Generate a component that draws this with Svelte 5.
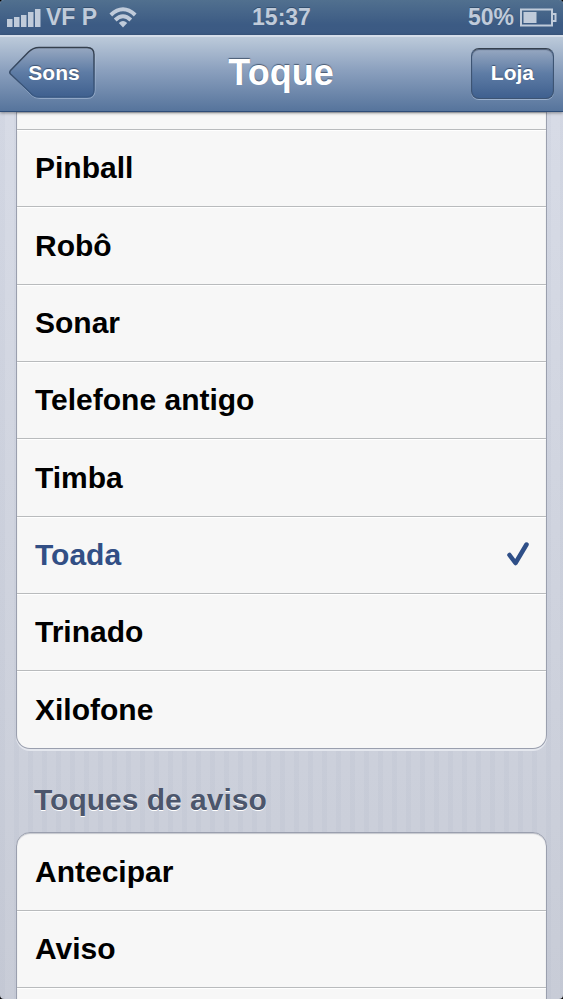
<script>
  let selected = "Toada";

  // an empty name is a row that is mostly scrolled out of view
  let ringtones = [
    "",
    "Pinball",
    "Robô",
    "Sonar",
    "Telefone antigo",
    "Timba",
    "Toada",
    "Trinado",
    "Xilofone",
  ];
  let alerts = ["Antecipar", "Aviso", ""];
</script>

{#snippet row(name)}
  <li>
    {#if name}
      <label class:selected={selected === name}>
        <input type="radio" name="tone" value={name} bind:group={selected} />
        <span>{name}</span>
        {#if selected === name}
          <svg class="check" width="24" height="26" viewBox="0 0 24 26">
            <path d="M3.5 13L9.5 21L20.5 2.500" />
          </svg>
        {/if}
      </label>
    {/if}
  </li>
{/snippet}

<div class="phone">
  <div class="status">
    <div class="carrier">
      <svg width="36" height="20" viewBox="0 0 36 20">
        <path d="M1 11h5.500v8h-5.500zM8 9h5.500v10h-5.500zM15 7h5.500v12h-5.500zM22 4h5.500v15h-5.500zM29 1h5.500v18h-5.500z" />
      </svg>
      <span>VF P</span>
      <svg class="wifi" width="28" height="21" viewBox="0 0 28 21">
        <path class="arc" d="M1.800 8Q14 -3.500 26.200 8" />
        <path class="arc" d="M6.200 13Q14 5.500 21.800 13" />
        <path d="M14 20.500L9.800 16Q14 12 18.200 16Z" />
      </svg>
    </div>
    <span>15:37</span>
    <div class="battery">
      <span>50%</span>
      <svg width="37" height="19" viewBox="0 0 37 19">
        <path class="case" d="M1 1.500h31v16h-31zM32 6h3.500v7h-3.500" />
        <path d="M3.500 4h13v11h-13z" />
      </svg>
    </div>
  </div>

  <header>
    <button class="back">
      <svg width="88" height="54" viewBox="0 0 88 54">
        <defs>
          <linearGradient id="backFill" x1="0" y1="0" x2="0" y2="1">
            <stop offset="0" stop-color="#97a8c1" />
            <stop offset="0.5" stop-color="#5e7ca5" />
            <stop offset="1" stop-color="#3f608f" />
          </linearGradient>
          <linearGradient id="backLine" x1="0" y1="0" x2="0" y2="1">
            <stop offset="0" stop-color="#35404e" />
            <stop offset="1" stop-color="#3a5a86" />
          </linearGradient>
        </defs>
        <path
          class="shine"
          d="M32 2.500H79Q87 2.500 87 10.500V44.500Q87 52.500 79 52.500H32Q26.500 52.500 23 49L3 29Q1.500 27 3 25L21 6Q25.500 2.500 32 2.500Z"
        />
        <path
          fill="url(#backFill)"
          stroke="url(#backLine)"
          stroke-width="1.500"
          d="M31 1.500H79Q86 1.500 86 8.500V44Q86 51 79 51H31Q25.500 51 22 46.500L2.500 28Q1 26.300 2.500 24.500L20.500 6Q25 1.500 31 1.500Z"
        />
      </svg>
      <span>Sons</span>
    </button>
    <h1>Toque</h1>
    <button class="store">Loja</button>
  </header>

  <main>
    <ul class="scrolled">
      {#each ringtones as name}
        {@render row(name)}
      {/each}
    </ul>
    <h2>Toques de aviso</h2>
    <ul>
      {#each alerts as name}
        {@render row(name)}
      {/each}
    </ul>
  </main>
</div>

<style>
  :global(body) {
    background: #000;
    overflow: hidden;
  }

  .phone {
    display: flex;
    flex-direction: column;
    height: 100vh;
    overflow: hidden;
    border-radius: 4px;
    font-family: "Liberation Sans", Arial, sans-serif;
    font-weight: bold;
    background:
      repeating-linear-gradient(90deg, rgba(90, 105, 140, 0.04) 0 5px, transparent 5px 14px),
      linear-gradient(#d9dde8, #c8ccd7);
  }

  .status {
    display: grid;
    grid-template-columns: 1fr auto 1fr;
    align-items: center;
    height: 35px;
    box-sizing: border-box;
    padding: 0 6px;
    font-size: 23px;
    color: #c0cbda;
    text-shadow: 0 -1px 0 #34506f;
    background: linear-gradient(#51708f, #3c5b84 70%, #3c5a83);
  }
  .status svg {
    fill: #c0cbda;
  }
  .carrier {
    display: flex;
    align-items: center;
    gap: 4px;
  }
  .wifi {
    margin-left: 8px;
  }
  .status .arc {
    fill: none;
    stroke: #c0cbda;
    stroke-width: 4;
  }
  .battery {
    display: flex;
    align-items: center;
    justify-content: flex-end;
    gap: 6px;
  }
  .case {
    fill: none;
    stroke: #c0cbda;
    stroke-width: 2;
  }

  header {
    position: relative;
    z-index: 1;
    display: grid;
    grid-template-columns: 1fr auto 1fr;
    align-items: center;
    height: 77px;
    box-sizing: border-box;
    padding: 0 9px 2px 8px;
    color: #fff;
    border-top: 2px solid #d5deea;
    border-bottom: 1px solid #2e4d78;
    background: linear-gradient(#bccada, #8ba0be 45%, #56749c);
    box-shadow: 0 1px 3px rgba(0, 0, 0, 0.4);
  }
  h1 {
    margin: 0;
    font-size: 36px;
    line-height: 40px;
    text-shadow: 0 -1px 1px #4a5b73;
  }
  button {
    padding: 0;
    border: 0;
    background: none;
    font: inherit;
    font-size: 21px;
    color: #fff;
    text-shadow: 0 -1px 1px #3d5170;
  }
  .back {
    display: grid;
    justify-self: start;
    place-items: center;
  }
  .back svg,
  .back span {
    grid-area: 1 / 1;
  }
  .back span {
    padding-left: 4px;
  }
  .shine {
    fill: none;
    stroke: rgba(210, 225, 245, 0.4);
  }
  .store {
    justify-self: end;
    height: 51px;
    padding: 0 19px;
    border: 1px solid #3d5473;
    border-top-color: #35404e;
    border-radius: 8px;
    background: linear-gradient(#97a8c1, #5e7ca5 50%, #3f608f);
    box-shadow:
      inset 0 1px 1px rgba(30, 45, 70, 0.6),
      0 1px 0 rgba(210, 225, 245, 0.5);
  }

  main {
    flex: 1;
    min-height: 0;
    overflow: hidden;
    padding: 0 16px;
  }
  ul {
    margin: 0;
    padding: 0;
    list-style: none;
    border: 1px solid #9a9fae;
    border-radius: 14px;
    overflow: hidden;
    background: #f7f7f7;
    box-shadow:
      inset 0 1px 1px #c4c6cc,
      0 2px 0 #e4e7ee;
  }
  .scrolled {
    border-top: 0;
    border-radius: 0 0 14px 14px;
  }
  li {
    height: 77px;
    box-sizing: border-box;
    font-size: 30px;
  }
  li:nth-child(3n) {
    height: 78px;
  }
  li + li {
    border-top: 1px solid #b9bbbd;
    box-shadow: inset 0 1px 0 #fff;
  }
  .scrolled li:first-child {
    height: 17px;
  }
  label {
    display: flex;
    align-items: center;
    height: 100%;
    padding: 0 16px 0 18px;
  }
  label span {
    flex: 1;
  }
  .selected {
    color: #324f85;
  }
  input {
    appearance: none;
    width: 0;
    height: 0;
    margin: 0;
  }
  .check {
    fill: none;
    stroke: #2f4f88;
    stroke-width: 4.5;
    stroke-linecap: round;
    stroke-linejoin: round;
  }
  h2 {
    margin: 0;
    padding: 34px 18px 15px;
    font-size: 30px;
    line-height: 34px;
    color: #4c566c;
    text-shadow: 0 1px 0 #fff;
  }
</style>
